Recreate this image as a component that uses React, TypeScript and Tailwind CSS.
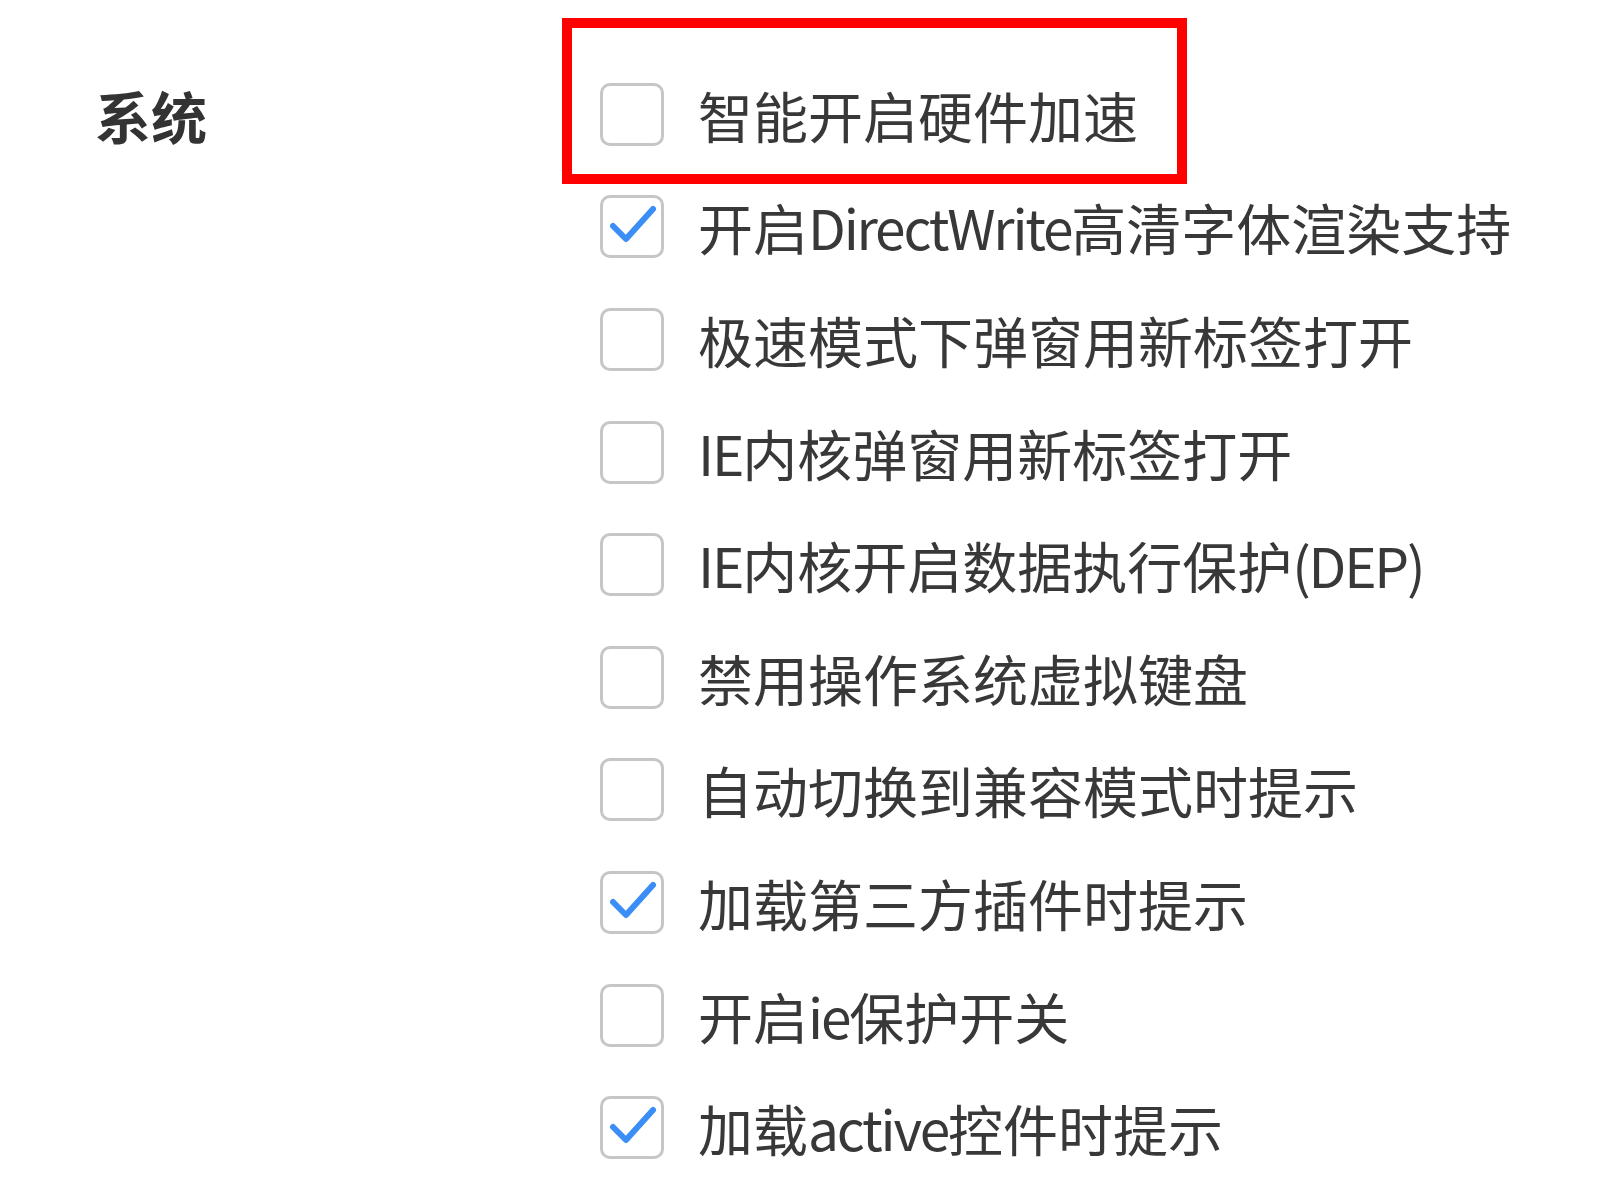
interface Option {
  label: string;
  checked: boolean;
}

const options: Option[] = [
  { label: '智能开启硬件加速', checked: false },
  { label: '开启DirectWrite高清字体渲染支持', checked: true },
  { label: '极速模式下弹窗用新标签打开', checked: false },
  { label: 'IE内核弹窗用新标签打开', checked: false },
  { label: 'IE内核开启数据执行保护(DEP)', checked: false },
  { label: '禁用操作系统虚拟键盘', checked: false },
  { label: '自动切换到兼容模式时提示', checked: false },
  { label: '加载第三方插件时提示', checked: true },
  { label: '开启ie保护开关', checked: false },
  { label: '加载active控件时提示', checked: true },
];

function CheckBox({ checked }: { checked: boolean }) {
  return (
    <div className="w-[64px] h-[63px] shrink-0 rounded-[10px] border-[3px] border-[#c6c6c6] bg-white flex items-center justify-center">
      {checked && (
        <svg width="48" height="44" viewBox="0 0 48 44" className="ml-[2px] mb-[3px]">
          <polyline
            points="4,23 17,36 44,6"
            fill="none"
            stroke="#3a8ef6"
            strokeWidth="6"
            strokeLinecap="round"
            strokeLinejoin="round"
          />
        </svg>
      )}
    </div>
  );
}

// latin runs are a bit narrower in the original font
function Label({ text }: { text: string }) {
  const parts = text.split(/([A-Za-z()]+)/).filter(Boolean);
  return (
    <span className="ml-[34px] text-[55px] leading-none whitespace-nowrap">
      {parts.map((p, i) =>
        /^[A-Za-z()]+$/.test(p) ? (
          <span key={i} className="tracking-[-2.2px]">
            {p}
          </span>
        ) : (
          <span key={i}>{p}</span>
        ),
      )}
    </span>
  );
}

export default function App() {
  return (
    <div
      className="w-[1601px] h-[1184px] bg-white flex overflow-hidden text-[#383838]"
      style={{ fontFamily: '"Noto Sans CJK SC", "Noto Sans", sans-serif' }}
    >
      <div className="w-[600px] shrink-0 pl-[95px] pt-[58px]">
        <div className="h-[113px] flex items-center text-[56px] font-bold text-[#333]">系统</div>
      </div>
      <div className="flex flex-col pt-[58px]">
        {options.map((opt, i) => (
          <div key={opt.label} className="relative h-[113px] flex items-center">
            {i === 0 && (
              <div className="absolute left-[-38px] top-[-40px] w-[625px] h-[166px] border-[10px] border-[#ff0000] pointer-events-none" />
            )}
            <CheckBox checked={opt.checked} />
            <Label text={opt.label} />
          </div>
        ))}
      </div>
    </div>
  );
}
